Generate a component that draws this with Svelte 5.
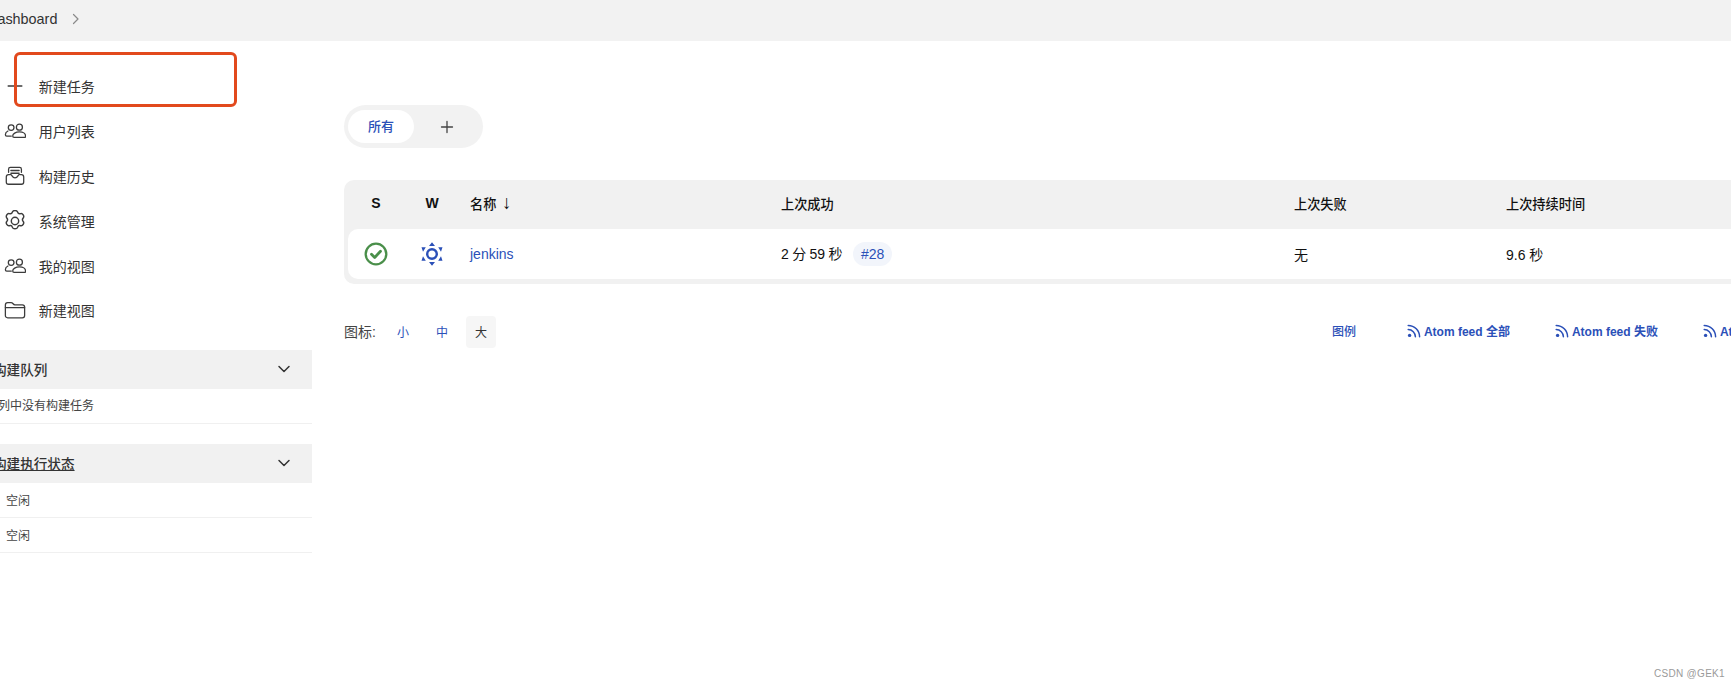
<script>
  const tasks = [
    { label: '新建任务', icon: 'plus' },
    { label: '用户列表', icon: 'people' },
    { label: '构建历史', icon: 'tray' },
    { label: '系统管理', icon: 'gear' },
    { label: '我的视图', icon: 'people' },
    { label: '新建视图', icon: 'folder' }
  ]
  const feeds = ['Atom feed 全部', 'Atom feed 失败', 'Atom feed 最新的构建']
</script>

{#snippet chevron()}
  <svg class="chevron" viewBox="0 0 14 8" width="14" height="8" fill="none" stroke="#333" stroke-width="1.5" stroke-linecap="round" stroke-linejoin="round">
    <path d="M2 1.500l5 5 5-5" />
  </svg>
{/snippet}

{#snippet rss()}
  <svg class="rss" viewBox="0 0 14 14" width="14" height="14" fill="none" stroke="#2b50b8" stroke-width="1.5" stroke-linecap="round">
    <path d="M1.200 5.600a7.200 7.200 0 0 1 7.200 7.200" />
    <path d="M1.200 1.400a11.400 11.400 0 0 1 11.400 11.400" />
    <circle cx="2.600" cy="11.400" r="1.700" fill="#2b50b8" stroke="none" />
  </svg>
{/snippet}

<div class="page">
  <header class="breadcrumb">
    <span>Dashboard</span>
    <svg viewBox="0 0 8 12" width="8" height="12" fill="none" stroke="#8a8a8a" stroke-width="1.2" stroke-linecap="round" stroke-linejoin="round">
      <path d="M1.500 1.500L6 6l-4.500 4.500" />
    </svg>
  </header>

  <div class="layout">
    <aside class="sidebar">
      <nav class="tasks">
        {#each tasks as task}
          <div class="task">
            <span class="task-icon">
              <svg viewBox="0 0 24 24" width="22" height="22" fill="none" stroke="#3c3c3c" stroke-width="1.4" stroke-linecap="round" stroke-linejoin="round">
                {#if task.icon === 'plus'}
                  <path d="M12 4.500v15M4.500 12h15" />
                {:else if task.icon === 'people'}
                  <circle cx="7.800" cy="8.300" r="3.100" />
                  <circle cx="16.800" cy="7.800" r="3.300" />
                  <path d="M4.300 12C2.300 13 1.500 14.500 1.500 16c0 1 .7 1.500 1.500 1.500h5" />
                  <path d="M16.800 13c-4 0-7.300 1.900-7.300 4.500 0 1 .7 1.500 1.500 1.500h11.600c.8 0 .9-.5.900-1.500 0-2.600-2.700-4.500-6.700-4.500z" />
                {:else if task.icon === 'tray'}
                  <path d="M5 8V4.500C5 3 6 2.500 7 2.500h10c1 0 2 .5 2 2V8" />
                  <path d="M7.500 6h9M7.500 9h9" />
                  <path d="M2.500 13c0-1.500 1-2.500 2.500-2.500h2.500c1 0 1.500 3.500 4.500 3.500s3.500-3.500 4.500-3.500H19c1.500 0 2.500 1 2.500 2.500v5.500c0 1.500-1 2.500-2.500 2.500H5c-1.500 0-2.500-1-2.500-2.500z" />
                {:else if task.icon === 'gear'}
                  <g transform="translate(12 12) scale(1.12) translate(-12 -12)">
                    <circle cx="12" cy="12" r="3.600" />
                    <path d="M9.500 3.200c.3-1 1-1.400 2.500-1.400s2.200.4 2.500 1.400c.4 1.300 1.600 2 3 1.600 1-.3 1.700 0 2.500 1.300s.7 2.100 0 2.900c-.9 1-.9 2.400 0 3.400.7.800.8 1.500 0 2.900s-1.500 1.600-2.500 1.300c-1.400-.4-2.600.3-3 1.600-.3 1-1 1.400-2.500 1.400s-2.200-.4-2.500-1.400c-.4-1.300-1.600-2-3-1.600-1 .3-1.700 0-2.500-1.300s-.7-2.100 0-2.900c.9-1 .9-2.400 0-3.400-.7-.8-.8-1.500 0-2.900s1.500-1.600 2.500-1.300c1.400.4 2.600-.3 3-1.600z" />
                  </g>
                {:else}
                  <path d="M1.500 6.500C1.500 5 2.500 4 4 4h3.700c1 0 1.500.4 2.200 1.200.6.700 1 1.100 2 1.100H20c1.500 0 2.500 1 2.500 2.500v9.200c0 1.500-1 2.500-2.500 2.500H4c-1.500 0-2.500-1-2.500-2.500z" />
                  <path d="M1.500 9.300h21" />
                {/if}
              </svg>
            </span>
            <span>{task.label}</span>
          </div>
        {/each}
      </nav>

      <section class="panel queue">
        <div class="panel-head">
          <span>构建队列</span>
          {@render chevron()}
        </div>
        <div class="panel-row clipped">队列中没有构建任务</div>
      </section>

      <section class="panel">
        <div class="panel-head">
          <span class="underlined">构建执行状态</span>
          {@render chevron()}
        </div>
        <div class="panel-row idle">空闲</div>
        <div class="panel-row idle">空闲</div>
      </section>
    </aside>

    <main class="content">
      <div class="tabs">
        <span class="tab-active">所有</span>
        <span class="tab-add">
          <svg viewBox="0 0 14 14" width="14" height="14" fill="none" stroke="#444" stroke-width="1.3" stroke-linecap="round">
            <path d="M7 1.500v11M1.500 7h11" />
          </svg>
        </span>
      </div>

      <div class="table-wrap">
        <table>
          <thead>
            <tr>
              <th class="center col-s">S</th>
              <th class="center col-w">W</th>
              <th class="col-name">名称 <span class="arrow">↓</span></th>
              <th class="col-ok">上次成功</th>
              <th class="col-fail">上次失败</th>
              <th>上次持续时间</th>
            </tr>
          </thead>
          <tbody>
            <tr>
              <td class="center first">
                <svg class="cell-icon" viewBox="0 0 24 24" width="24" height="24" fill="none">
                  <circle cx="12" cy="12" r="10.300" stroke="#4a8f4a" stroke-width="2.300" />
                  <path d="M7.500 12.300l3.200 3.200 5.800-6.300" stroke="#4a8f4a" stroke-width="2.800" stroke-linecap="round" stroke-linejoin="round" />
                </svg>
              </td>
              <td class="center">
                <svg class="cell-icon" viewBox="0 0 24 24" width="24" height="24" fill="#2b50b8">
                  <circle cx="12" cy="12" r="4.800" fill="none" stroke="#2b50b8" stroke-width="2.400" />
                  <path d="M12 .3l3 3.700H9zM12 23.700L9 20h6zM1.500 5.300h4.300L3 9.800zM22.500 5.300h-4.300L21 9.800zM1.500 18.700h4.300L3 14.200zM22.500 18.700h-4.300L21 14.200z" />
                </svg>
              </td>
              <td><span class="link">jenkins</span></td>
              <td class="ago">2 分 59 秒 <span class="build">#28</span></td>
              <td>无</td>
              <td class="last">9.6 秒</td>
            </tr>
          </tbody>
        </table>
      </div>

      <div class="footer">
        <div class="sizes">
          <span class="size-label">图标:</span>
          <span class="size">小</span>
          <span class="size">中</span>
          <span class="size current">大</span>
        </div>
        <div class="links">
          <span class="legend">图例</span>
          {#each feeds as feed}
            <span class="feed">{@render rss()}{feed}</span>
          {/each}
        </div>
      </div>
    </main>
  </div>

  <div class="highlight"></div>
  <div class="watermark">CSDN @GEK1</div>
</div>

<style>
  :global(body) {
    overflow: hidden;
    background: #fff;
  }

  .page {
    position: relative;
    width: 1731px;
    height: 687px;
    overflow: hidden;
    font-family: "Liberation Sans", "Noto Sans CJK SC", sans-serif;
    font-size: 14px;
    color: #222;
  }

  .breadcrumb {
    display: flex;
    align-items: center;
    gap: 15px;
    height: 41px;
    padding-bottom: 4px;
    box-sizing: border-box;
    margin-left: -13px;
    background: #f2f2f2;
    font-size: 14.4px;
    color: #333;
  }

  .layout {
    display: flex;
  }

  .sidebar {
    flex: none;
    width: 312px;
    padding-top: 23px;
  }

  .tasks {
    display: flex;
    flex-direction: column;
  }

  .task {
    display: flex;
    align-items: center;
    height: 44.8px;
    gap: 12.7px;
    padding-left: 4px;
    font-size: 14px;
    color: #333;
  }

  .task-icon {
    display: flex;
  }

  .queue {
    margin-top: 17px;
    margin-bottom: 20px;
  }

  .panel-head {
    display: flex;
    align-items: center;
    justify-content: space-between;
    height: 39.5px;
    margin-left: -7px;
    padding: 0 21px 2px 0;
    box-sizing: border-box;
    background: #f1f1f1;
    font-size: 13.6px;
    font-weight: 500;
    color: #333;
  }

  .underlined {
    text-decoration: underline;
  }

  .panel-row {
    display: flex;
    align-items: center;
    height: 34.5px;
    padding-bottom: 3px;
    border-bottom: 1px solid #f0f0f0;
    box-sizing: border-box;
    font-size: 12px;
    color: #444;
  }

  .clipped {
    margin-left: -14px;
    padding-left: 0;
  }

  .idle {
    height: 35px;
    padding-left: 6px;
    padding-bottom: 2px;
  }

  .content {
    flex: none;
    width: 1500px;
    padding-left: 32px;
    box-sizing: border-box;
  }

  .tabs {
    display: inline-flex;
    align-items: center;
    width: 139px;
    height: 43px;
    margin-top: 64px;
    padding: 0 4px;
    box-sizing: border-box;
    border-radius: 22px;
    background: #f2f2f2;
  }

  .tab-active {
    display: flex;
    align-items: center;
    justify-content: center;
    width: 66px;
    height: 33px;
    padding-bottom: 2px;
    box-sizing: border-box;
    border-radius: 17px;
    background: #fff;
    color: #2b50b8;
    font-size: 13px;
    font-weight: 500;
  }

  .tab-add {
    display: flex;
    justify-content: center;
    flex: 1;
  }

  .table-wrap {
    margin-top: 32px;
    padding: 0 4px 5px;
    width: 1500px;
    box-sizing: border-box;
    border-radius: 10px;
    background: #f1f1f1;
  }

  table {
    width: 100%;
    table-layout: fixed;
    border-collapse: separate;
    border-spacing: 0;
  }

  th {
    height: 49px;
    padding: 0 0 3px 10px;
    box-sizing: border-box;
    font-size: 13.2px;
    font-weight: 500;
    color: #111;
    text-align: left;
  }

  th.col-s, th.col-w {
    width: 56px;
    font-size: 14px;
    font-weight: 700;
  }
  th.col-name { width: 311px; }
  th.col-ok { width: 513px; }
  th.col-fail { width: 212px; }

  th.center {
    padding: 0 0 3px;
    text-align: center;
  }

  .arrow {
    margin-left: 2px;
    font-size: 19px;
    font-weight: 400;
    line-height: 1;
  }

  td {
    height: 50px;
    padding: 0 0 0 10px;
    box-sizing: border-box;
    background: #fff;
    font-size: 14px;
    color: #111;
  }

  td.center {
    padding: 0;
  }

  td.first {
    border-radius: 10px 0 0 10px;
  }

  .ago {
    word-spacing: -0.5px;
  }

  .cell-icon {
    display: block;
    margin: 0 auto;
  }

  .link {
    color: #2b50b8;
  }

  .build {
    display: inline-block;
    margin-left: 7px;
    padding: 0 8px;
    height: 24px;
    line-height: 24px;
    border-radius: 12px;
    background: #f2f5fb;
    color: #2b50b8;
  }

  .footer {
    display: flex;
    align-items: center;
    margin-top: 32px;
    height: 32px;
    font-size: 12px;
  }

  .sizes {
    display: flex;
    flex: none;
    align-items: center;
  }

  .size-label {
    flex: none;
    margin-right: 12px;
    padding-bottom: 2px;
    font-size: 14px;
    color: #444;
    white-space: nowrap;
  }

  .size {
    display: flex;
    align-items: center;
    justify-content: center;
    width: 30px;
    height: 32px;
    margin-right: 9px;
    padding-bottom: 2px;
    box-sizing: border-box;
    border-radius: 4px;
    color: #2b50b8;
  }

  .current {
    margin-right: 0;
    background: #f6f6f6;
    color: #333;
  }

  .links {
    display: flex;
    align-items: center;
    flex: none;
    margin-left: 836px;
    padding-bottom: 3px;
    font-weight: 700;
    color: #2b50b8;
  }

  .legend {
    flex: none;
    margin-right: 51px;
    font-weight: 500;
  }

  .feed {
    display: flex;
    align-items: center;
    flex: none;
    gap: 3px;
    margin-right: 45px;
    white-space: nowrap;
  }

  .highlight {
    position: absolute;
    left: 14px;
    top: 52px;
    width: 223px;
    height: 55px;
    box-sizing: border-box;
    border: 3px solid #e2491d;
    border-radius: 6px;
  }

  .watermark {
    position: absolute;
    left: 1654px;
    top: 668px;
    font-size: 10px;
    letter-spacing: 0.3px;
    color: #9a9a9a;
  }
</style>
